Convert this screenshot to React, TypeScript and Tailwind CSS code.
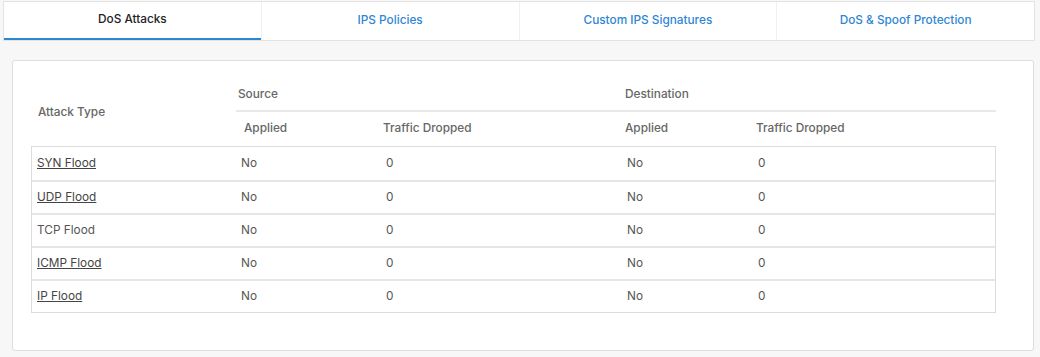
import React from "react";

const tabs = ["DoS Attacks", "IPS Policies", "Custom IPS Signatures", "DoS & Spoof Protection"];
const rows = [
  { name: "SYN Flood", link: true },
  { name: "UDP Flood", link: true },
  { name: "TCP Flood", link: false },
  { name: "ICMP Flood", link: true },
  { name: "IP Flood", link: true },
];

export default function App() {
  return (
    <div className="w-[1040px] h-[357px] bg-[#f7f7f7] pt-px overflow-hidden" style={{ fontFamily: "Inter, 'Noto Sans', sans-serif" }}>
      <div className="ml-[3px] w-[1032px] h-[40px] flex bg-white border border-[#e3e3e3]">
        {tabs.map((t, i) => (
          <div
            key={t}
            className={
              i === 0
                ? "flex-1 flex items-center justify-center text-[11.8px] font-medium text-[#222] border-b-2 border-[#2a87d0]"
                : "flex-1 flex items-center justify-center text-[11.8px] font-medium text-[#2f86d3] border-l border-[#f0f0f0] pb-[1px]"
            }
          >
            {t}
          </div>
        ))}
      </div>
      <div className="ml-[12px] mt-[19px] w-[1022px] h-[291px] bg-white border border-[#dedede] rounded-[3px] pt-[18px] pl-[18px]">
        <div className="w-[965px] text-[11.8px]">
          <div className="flex h-[67px]">
            <div className="w-[205px] flex items-center pl-[7px] font-medium text-[#666]">Attack Type</div>
            <div className="flex-1 flex flex-col">
              <div className="h-[33px] flex border-b-2 border-[#e8e8e8]">
                <div className="w-[383px] flex items-center pl-[2px] font-medium text-[#666]">Source</div>
                <div className="flex-1 flex items-center pl-[6px] font-medium text-[#666]">Destination</div>
              </div>
              <div className="flex-1 flex font-medium text-[#666]">
                <div className="w-[144px] flex items-center pl-[8px]">Applied</div>
                <div className="w-[239px] flex items-center pl-[3px]">Traffic Dropped</div>
                <div className="w-[131px] flex items-center pl-[6px]">Applied</div>
                <div className="flex-1 flex items-center pl-[6px]">Traffic Dropped</div>
              </div>
            </div>
          </div>
          <div className="border border-[#dcdcdc]">
            {rows.map((r, i) => (
              <div key={r.name} className={"flex h-[33px] text-[#555] " + (i > 0 ? "border-t-2 border-[#e6e6e6]" : "")}>
                <div className={"w-[204px] flex items-center pl-[5px] " + (r.link ? "underline text-[#444]" : "")}>{r.name}</div>
                <div className="w-[144px] flex items-center pl-[5px]">No</div>
                <div className="w-[239px] flex items-center pl-[6px]">0</div>
                <div className="w-[131px] flex items-center pl-[8px]">No</div>
                <div className="flex-1 flex items-center pl-[8px]">0</div>
              </div>
            ))}
          </div>
        </div>
      </div>
    </div>
  );
}
